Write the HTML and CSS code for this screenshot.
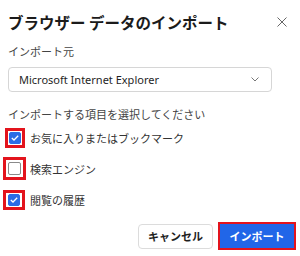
FILE: index.html
```html
<!DOCTYPE html>
<html lang="ja">
<head>
<meta charset="utf-8">
<link rel="stylesheet" href="styles.css">
</head>
<body>
<div class="dialog">
  <div class="header">
    <h1 class="title">ブラウザー データのインポート</h1>
    <button class="close" aria-label="閉じる">
      <svg width="10" height="10" viewBox="0 0 10 10"><path d="M0.5 0.5 L9.5 9.5 M9.5 0.5 L0.5 9.5" stroke="#666" stroke-width="1" fill="none"/></svg>
    </button>
  </div>
  <div class="field-label">インポート元</div>
  <div class="select">
    <span class="select-text">Microsoft Internet Explorer</span>
    <svg class="chev" width="8" height="5" viewBox="0 0 8 5"><path d="M0.5 0.5 L4 4 L7.5 0.5" stroke="#777" stroke-width="1" fill="none"/></svg>
  </div>
  <div class="section-label">インポートする項目を選択してください</div>
  <div class="options">
    <div class="option">
      <span class="mark m1"><span class="cb checked"><svg width="8" height="6" viewBox="0 0 8 6"><path d="M0.8 3 L3 5 L7.2 0.8" stroke="#fff" stroke-width="1.3" fill="none"/></svg></span></span>
      <span class="opt-text">お気に入りまたはブックマーク</span>
    </div>
    <div class="option">
      <span class="mark m2"><span class="cb"></span></span>
      <span class="opt-text">検索エンジン</span>
    </div>
    <div class="option">
      <span class="mark m3"><span class="cb checked"><svg width="8" height="6" viewBox="0 0 8 6"><path d="M0.8 3 L3 5 L7.2 0.8" stroke="#fff" stroke-width="1.3" fill="none"/></svg></span></span>
      <span class="opt-text">閲覧の履歴</span>
    </div>
  </div>
  <div class="actions">
    <button class="btn">キャンセル</button>
    <span class="mark-btn"><button class="btn primary">インポート</button></span>
  </div>
</div>
</body>
</html>
```

FILE: styles.css
```css
* { box-sizing: border-box; }
html, body { margin: 0; padding: 0; background: #fff; }
body {
  width: 300px;
  height: 256px;
  overflow: hidden;
  font-family: "Noto Sans", "Noto Sans CJK JP", sans-serif;
  color: #222;
}
.dialog {
  display: flex;
  flex-direction: column;
  padding: 10px 8px 0 8px;
}
.header {
  display: flex;
  align-items: center;
  justify-content: space-between;
  height: 24px;
}
.title {
  margin: 0;
  font-family: "Noto Sans CJK JP", sans-serif;
  font-size: 15.5px;
  font-weight: 700;
  color: #1b1b1b;
  line-height: 24px;
}
.close {
  border: 0;
  background: none;
  padding: 0;
  width: 10px;
  height: 10px;
  margin-right: 5px;
  display: flex;
}
.field-label, .section-label {
  font-family: "Noto Sans CJK JP", sans-serif;
  font-size: 11px;
  line-height: 16px;
  color: #444;
}
.field-label { margin-top: 9px; }
.select {
  margin-top: 8px;
  width: 264px;
  height: 25px;
  border: 1px solid #d6d6d6;
  border-radius: 4px;
  display: flex;
  align-items: center;
  justify-content: space-between;
  padding: 0 12px 0 10px;
}
.select-text {
  font-size: 11px;
  color: #1f1f1f;
}
.section-label { margin-top: 14px; }
.options {
  display: flex;
  flex-direction: column;
}
.option {
  height: 31px;
  display: flex;
  align-items: center;
}
.opt-text {
  font-family: "Noto Sans CJK JP", sans-serif;
  font-size: 11px;
  color: #333;
}
.mark {
  display: inline-flex;
  border: 3px solid #e3141d;
  margin-left: -3px;
  margin-right: 5px;
}
.m1 { padding: 1px; margin-left: -3px; }
.m2 { padding: 2px; margin-left: -5px; margin-right: 4px; }
.m3 { padding: 1px 2px; margin-left: -5px; }
.cb {
  width: 12px;
  height: 12px;
  border-radius: 2px;
  border: 1px solid #8a8a8a;
  background: #fff;
  display: flex;
  align-items: center;
  justify-content: center;
}
.cb.checked {
  background: #2b6ce6;
  border-color: #2b6ce6;
}
.m2 .cb { width: 13px; height: 13px; }
.actions {
  margin-top: 7px;
  display: flex;
  justify-content: flex-end;
  align-items: center;
  gap: 5px;
  padding-right: 0;
  margin-right: -4px;
}
.btn {
  font-family: "Noto Sans CJK JP", sans-serif;
  font-size: 11px;
  font-weight: 700;
  height: 25px;
  width: 75px;
  border: 1px solid #dcdcdc;
  border-radius: 4px;
  background: #fff;
  color: #1e1e1e;
  padding: 0;
}
.mark-btn {
  display: inline-flex;
  border: 2px solid #e3141d;
  padding: 0;
}
.btn.primary {
  width: 74px;
  height: 24px;
  border: 0;
  border-radius: 0;
  background: #2166e8;
  color: #fff;
}
```
